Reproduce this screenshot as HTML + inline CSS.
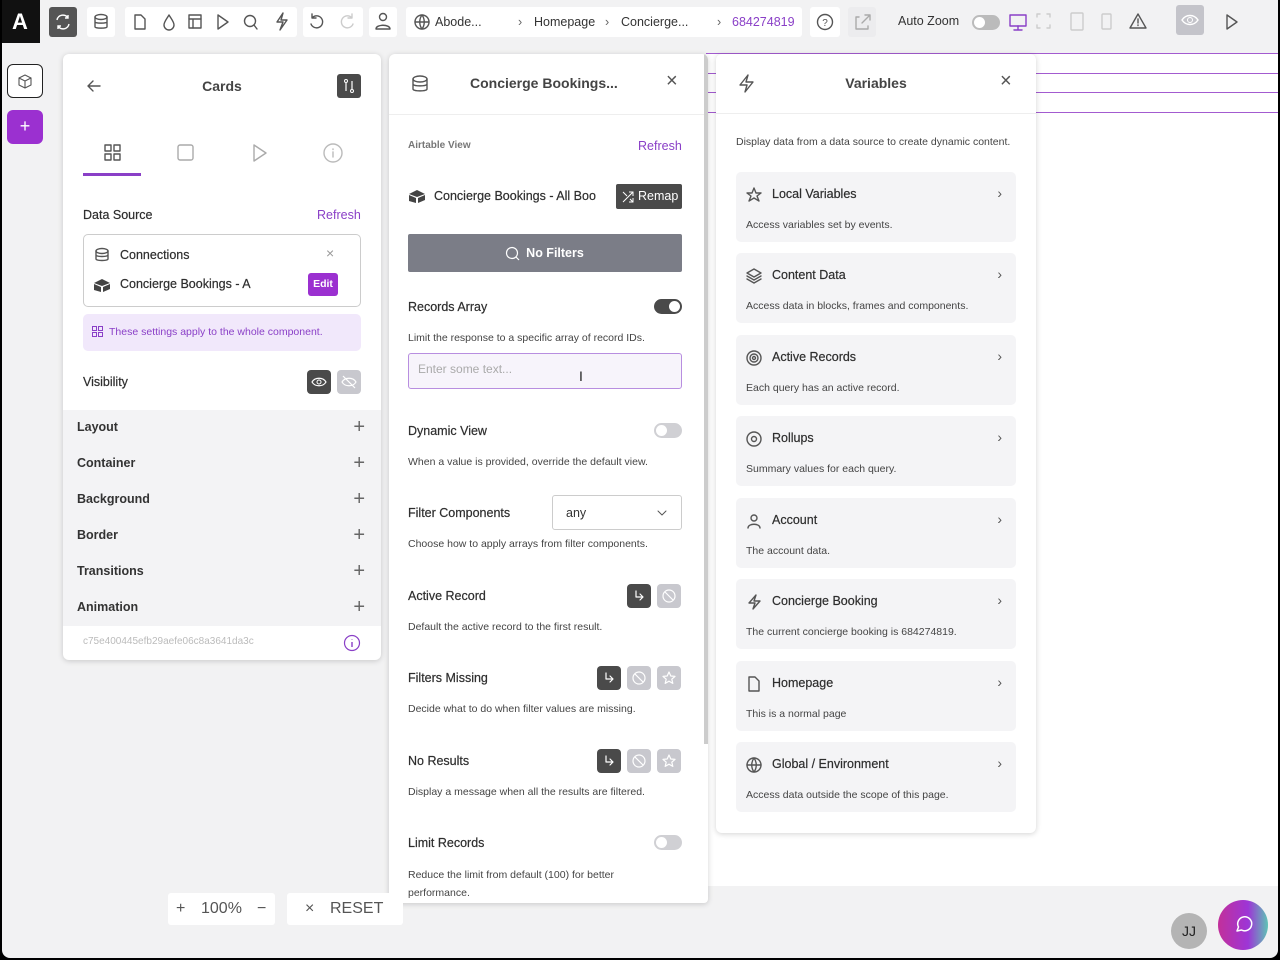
<!DOCTYPE html>
<html><head><meta charset="utf-8"><style>
*{box-sizing:border-box;margin:0;padding:0}
body{width:1280px;height:960px;overflow:hidden;background:#000;font-family:"Liberation Sans",sans-serif;color:#333;position:relative}
.a{position:absolute}
#app{position:absolute;left:2px;top:0;width:1276px;height:958px;background:#f2f2f3;border-radius:0 0 8px 8px;overflow:hidden}
.tb{position:absolute;top:7px;height:30px;background:#fff;border-radius:3px}
svg{display:block}
.ic{stroke:#555;fill:none;stroke-width:1.4;stroke-linecap:round;stroke-linejoin:round}
.panel{position:absolute;background:#fff;border-radius:6px;box-shadow:0 1px 6px rgba(0,0,0,.18)}
.lbl{font-size:12.5px;color:#2e2e2e;-webkit-text-stroke:0.2px #2e2e2e}
.sm{font-size:10.5px;color:#444}
.purple{color:#8a3fc7;-webkit-text-stroke:0}
.row{position:absolute;left:0;width:318px;height:36px;background:#f3f3f5;font-weight:bold;font-size:12.5px;color:#333;padding:10px 14px}
.row .p{position:absolute;right:16px;top:7px;font-size:20px;font-weight:normal;color:#666;line-height:20px}
.btn{position:absolute;width:24px;height:24px;border-radius:4px;background:#c8c8ce}
.btn.d{background:#4a4a4a}
.card{position:absolute;left:20px;width:280px;height:70px;background:#f4f4f6;border-radius:5px}
.card .h{position:absolute;left:36px;top:15px;font-size:12.5px;color:#2e2e2e;-webkit-text-stroke:0.2px #2e2e2e}
.card .s{position:absolute;left:10px;top:47px;font-size:10.5px;color:#444}
.card .ch{position:absolute;right:14px;top:13px;font-size:14px;color:#555}
.card svg{position:absolute;left:10px;top:15px}
.tog{position:absolute;width:28px;height:15px;border-radius:8px;background:#d0d0d4}
.tog:after{content:"";position:absolute;left:2px;top:2px;width:11px;height:11px;border-radius:50%;background:#fff}
.tog.on{background:#4a4a4a}.tog.on:after{left:15px}
.w{stroke:#fff;fill:none;stroke-width:1.2;stroke-linecap:round;stroke-linejoin:round}
</style></head><body>
<svg width="0" height="0" style="position:absolute"><defs>
<symbol id="arr" viewBox="0 0 24 24"><path d="M9 7v6h7M13 10l3 3-3 3" class="w"/></symbol>
<symbol id="ban" viewBox="0 0 24 24"><circle cx="12" cy="12" r="6" class="w"/><path d="M8 8l8 8" class="w"/></symbol>
<symbol id="star" viewBox="0 0 24 24"><path d="M12 6l1.8 4 4.2.4-3.2 2.8 1 4.2-3.8-2.2-3.8 2.2 1-4.2L6 10.4l4.2-.4z" class="w"/></symbol>
</defs></svg>
<div id="app">
<div class="a" style="left:-2px;top:0;width:40px;height:43px;background:#111;color:#fff;font-weight:bold;font-size:22px;text-align:center;line-height:43px">A</div>
<div class="tb" style="left:47px;width:28px;background:#555"><svg width="28" height="30"><path d="M8 13a6 6 0 0 1 11-2M20 17a6 6 0 0 1-11 2M19 8v3h-3M9 22v-3h3" stroke="#fff" fill="none" stroke-width="1.4"/></svg></div>
<div class="tb" style="left:85px;width:28px"><svg width="28" height="30"><ellipse cx="14" cy="10" rx="6" ry="2.5" class="ic"/><path d="M8 10v10c0 1.5 12 1.5 12 0V10M8 15c0 1.5 12 1.5 12 0" class="ic"/></svg></div>
<div class="tb" style="left:123px;width:172px"><svg width="172" height="30"><path d="M10 8h6l4 4v10h-10z" class="ic"/><path d="M44 8c-3 5-5 7-5 10a5 5 0 0 0 10 0c0-3-2-5-5-10z" class="ic"/><rect x="64" y="8" width="12" height="13" class="ic"/><path d="M64 12h12M68 12v9" class="ic"/><path d="M93 8l10 7-10 7z" class="ic"/><circle cx="125" cy="14" r="5.5" class="ic"/><path d="M129 18l3 4" class="ic"/><path d="M158 6l-6 9h6l-3 8 7-10h-6z" class="ic"/></svg></div>
<div class="tb" style="left:301px;width:60px"><svg width="60" height="30"><path d="M9 11a6 6 0 1 1-1 6M9 7v4h4" class="ic"/><path d="M49 11a6 6 0 1 0 1 6M49 7v4h-4" class="ic" style="stroke:#ccc"/></svg></div>
<div class="tb" style="left:367px;width:28px"><svg width="28" height="30"><circle cx="14" cy="10" r="3.5" class="ic"/><path d="M7 22c0-5 14-5 14 0z" class="ic"/></svg></div>
<div class="tb" style="left:404px;width:396px;font-size:12.5px;line-height:30px">
<svg width="20" height="30" class="a" style="left:6px;top:0"><circle cx="10" cy="15" r="7" class="ic"/><path d="M3 15h14M10 8c-3 4-3 10 0 14M10 8c3 4 3 10 0 14" class="ic"/></svg>
<span class="a" style="left:29px">Abode...</span><span class="a" style="left:112px;color:#666">›</span><span class="a" style="left:128px">Homepage</span><span class="a" style="left:199px;color:#666">›</span><span class="a" style="left:215px">Concierge...</span><span class="a" style="left:311px;color:#666">›</span><span class="a purple" style="left:326px">684274819</span></div>
<div class="tb" style="left:808px;width:30px"><svg width="30" height="30"><circle cx="15" cy="15" r="7.5" class="ic"/><text x="15" y="19" font-size="10" text-anchor="middle" fill="#555" font-family="Liberation Sans">?</text></svg></div>
<div class="tb" style="left:846px;width:28px;background:#ececee"><svg width="28" height="30"><path d="M11 10H8v12h12v-3M14 16l8-8M17 8h5v5" class="ic" style="stroke:#aaa"/></svg></div>
<div class="a" style="left:896px;top:14px;font-size:12.5px">Auto Zoom</div>
<div class="tog" style="left:970px;top:15px;background:#bbb"></div>
<svg class="a" style="left:1005px;top:10px" width="140" height="24"><rect x="3" y="5" width="16" height="11" class="ic" style="stroke:#8a3fc7"/><path d="M7 20h8M11 16v4" class="ic" style="stroke:#8a3fc7"/><path d="M33 4h-3v3M40 4h3v3M33 18h-3v-3M40 18h3v-3" class="ic" style="stroke:#ccc"/><rect x="64" y="3" width="12" height="17" rx="1" class="ic" style="stroke:#ccc"/><rect x="95" y="4" width="9" height="15" rx="1" class="ic" style="stroke:#ccc"/><path d="M141 4l-8 14h16z" class="ic" transform="translate(-10 0)"/><path d="M131 9v4M131 15v.5" class="ic"/></svg>
<div class="a" style="left:1174px;top:5px;width:28px;height:30px;background:#c4c4ca;border-radius:3px"><svg width="28" height="30"><path d="M6 15c4-6 12-6 16 0c-4 6-12 6-16 0z" stroke="#fff" fill="none" stroke-width="1.4"/><circle cx="14" cy="15" r="2.5" stroke="#fff" fill="none"/></svg></div>
<svg class="a" style="left:1222px;top:13px" width="16" height="18"><path d="M3 2l10 7-10 7z" class="ic"/></svg>

<div class="a" style="left:5px;top:64px;width:36px;height:34px;background:#fff;border:1.5px solid #222;border-radius:6px"><svg width="34" height="32"><path d="M17 10l6 3v7l-6 3-6-3v-7zM11 13l6 3 6-3M17 16v7" class="ic" style="stroke-width:1.1"/></svg></div>
<div class="a" style="left:5px;top:110px;width:36px;height:34px;background:#9b30d0;border-radius:6px;color:#fff;text-align:center;font-size:18px;line-height:33px">+</div>

<div class="a" style="left:704px;top:53px;width:572px;height:833px;background:#fff"></div>
<div class="a" style="left:704px;top:53px;width:572px;height:1px;background:#a35bd0"></div>
<div class="a" style="left:704px;top:73px;width:572px;height:1px;background:#a35bd0"></div>
<div class="a" style="left:704px;top:92px;width:572px;height:1px;background:#a35bd0"></div>
<div class="a" style="left:704px;top:112px;width:572px;height:1px;background:#a35bd0"></div>

<div class="panel" style="left:61px;top:54px;width:318px;height:606px;overflow:hidden">
<svg class="a" style="left:22px;top:23px" width="18" height="18"><path d="M15 9H3M8 4L3 9l5 5" class="ic"/></svg>
<div class="a" style="left:0;width:318px;top:24px;text-align:center;font-weight:bold;font-size:14px;color:#444">Cards</div>
<div class="a" style="left:274px;top:20px;width:24px;height:24px;background:#4a4a4a;border-radius:3px"><svg width="24" height="24"><circle cx="9" cy="7" r="1.5" stroke="#fff" fill="none"/><circle cx="15" cy="17" r="1.5" stroke="#fff" fill="none"/><path d="M9 9v8M15 7v8" stroke="#fff" fill="none" stroke-width="1.2"/></svg></div>
<svg class="a" style="left:41px;top:90px" width="18" height="18"><rect x="1" y="1" width="6" height="6" class="ic"/><rect x="10" y="1" width="6" height="6" class="ic"/><rect x="1" y="10" width="6" height="6" class="ic"/><rect x="10" y="10" width="6" height="6" class="ic"/></svg>
<div class="a" style="left:20px;top:119px;width:58px;height:3px;background:#8a3fc7"></div>
<svg class="a" style="left:114px;top:90px" width="18" height="18"><rect x="1" y="1" width="15" height="15" rx="2" class="ic" style="stroke:#aaa"/></svg>
<svg class="a" style="left:188px;top:90px" width="18" height="18"><path d="M3 1l12 8-12 8z" class="ic" style="stroke:#aaa"/></svg>
<svg class="a" style="left:260px;top:89px" width="20" height="20"><circle cx="10" cy="10" r="9" class="ic" style="stroke:#bbb"/><path d="M10 9v5M10 6v.5" class="ic" style="stroke:#bbb"/></svg>
<div class="a lbl" style="left:20px;top:154px">Data Source</div>
<div class="a lbl purple" style="left:254px;top:154px">Refresh</div>
<div class="a" style="left:20px;top:180px;width:278px;height:73px;border:1px solid #ccc;border-radius:5px">
<svg class="a" style="left:10px;top:12px" width="16" height="16"><ellipse cx="8" cy="4" rx="6" ry="2.5" class="ic"/><path d="M2 4v8c0 2 12 2 12 0V4M2 8c0 2 12 2 12 0" class="ic"/></svg>
<div class="a lbl" style="left:36px;top:13px">Connections</div>
<div class="a" style="left:242px;top:10px;color:#999;font-size:14px">×</div>
<svg class="a" style="left:9px;top:43px" width="18" height="14"><path d="M1 5l8-4 8 4-8 3z" fill="#444"/><path d="M1 6v6l7 2V9zM10 9v5l7-3V6z" fill="#444"/></svg>
<div class="a lbl" style="left:36px;top:42px">Concierge Bookings - A</div>
<div class="a" style="left:224px;top:38px;width:30px;height:23px;background:#9b30d0;border-radius:3px;color:#fff;font-size:10.5px;font-weight:bold;text-align:center;line-height:23px">Edit</div>
</div>
<div class="a" style="left:20px;top:260px;width:278px;height:37px;background:#f1e8fb;border-radius:5px;font-size:10.5px;color:#8a3fc7;padding:12px 0 0 26px">These settings apply to the whole component.
<svg class="a" style="left:9px;top:12px" width="12" height="12"><rect x="0.5" y="0.5" width="4" height="4" fill="none" stroke="#8a3fc7"/><rect x="6.5" y="0.5" width="4" height="4" fill="none" stroke="#8a3fc7"/><rect x="0.5" y="6.5" width="4" height="4" fill="none" stroke="#8a3fc7"/><rect x="6.5" y="6.5" width="4" height="4" fill="none" stroke="#8a3fc7"/></svg></div>
<div class="a lbl" style="left:20px;top:321px">Visibility</div>
<div class="btn d" style="left:244px;top:316px"><svg width="24" height="24"><path d="M5 12c3-5 11-5 14 0c-3 5-11 5-14 0z" stroke="#fff" fill="none" stroke-width="1.2"/><circle cx="12" cy="12" r="2" stroke="#fff" fill="none"/></svg></div>
<div class="btn" style="left:274px;top:316px"><svg width="24" height="24"><path d="M5 12c3-5 11-5 14 0c-3 5-11 5-14 0zM6 6l12 12" stroke="#fff" fill="none" stroke-width="1.2"/></svg></div>
<div class="row" style="top:356px">Layout<span class="p">+</span></div>
<div class="row" style="top:392px">Container<span class="p">+</span></div>
<div class="row" style="top:428px">Background<span class="p">+</span></div>
<div class="row" style="top:464px">Border<span class="p">+</span></div>
<div class="row" style="top:500px">Transitions<span class="p">+</span></div>
<div class="row" style="top:536px">Animation<span class="p">+</span></div>
<div class="a" style="left:20px;top:582px;font-size:10px;color:#bbb">c75e400445efb29aefe06c8a3641da3c</div>
<svg class="a" style="left:280px;top:580px" width="18" height="18"><circle cx="9" cy="9" r="7.5" fill="none" stroke="#8a3fc7" stroke-width="1.2"/><path d="M9 8v5M9 5.5v.5" stroke="#8a3fc7" stroke-width="1.4"/></svg>
</div>

<div class="panel" style="left:387px;top:54px;width:319px;height:849px;overflow:hidden;border-radius:6px 6px 4px 4px">
<svg class="a" style="left:22px;top:20px" width="18" height="20"><ellipse cx="9" cy="5" rx="7" ry="3" class="ic"/><path d="M2 5v10c0 2.5 14 2.5 14 0V5M2 10c0 2.5 14 2.5 14 0" class="ic"/></svg>
<div class="a" style="left:81px;top:21px;font-weight:bold;font-size:14px;color:#444">Concierge Bookings...</div>
<div class="a" style="left:277px;top:16px;font-size:20px;color:#555">×</div>
<div class="a" style="left:0;top:60px;width:319px;height:1px;background:#eee"></div>
<div class="a" style="left:19px;top:86px;font-size:10px;font-weight:bold;color:#777">Airtable View</div>
<div class="a lbl purple" style="left:249px;top:85px">Refresh</div>
<svg class="a" style="left:19px;top:135px" width="18" height="14"><path d="M1 5l8-4 8 4-8 3z" fill="#444"/><path d="M1 6v6l7 2V9zM10 9v5l7-3V6z" fill="#444"/></svg>
<div class="a lbl" style="left:45px;top:135px">Concierge Bookings - All Boo</div>
<div class="a" style="left:227px;top:130px;width:66px;height:25px;background:#4a4a4a;border-radius:2px;color:#fff;font-size:12.5px;line-height:25px;padding-left:22px">Remap<svg class="a" style="left:6px;top:7px" width="12" height="12"><path d="M1 11L11 1M7 1h4v4M1 1l4 4M11 11L8 8M11 7v4H7" stroke="#fff" fill="none" stroke-width="1"/></svg></div>
<div class="a" style="left:19px;top:180px;width:274px;height:38px;background:#7b7d87;border-radius:2px;color:#fff;font-weight:bold;font-size:12.5px;line-height:38px;text-align:center;padding-left:20px">No Filters<svg class="a" style="left:97px;top:12px" width="16" height="16"><circle cx="7" cy="7" r="5.5" stroke="#fff" fill="none" stroke-width="1.2"/><path d="M11 11l3 3" stroke="#fff" stroke-width="1.2"/></svg></div>
<div class="a lbl" style="left:19px;top:246px">Records Array</div>
<div class="tog on" style="left:265px;top:245px"></div>
<div class="a sm" style="left:19px;top:278px">Limit the response to a specific array of record IDs.</div>
<div class="a" style="left:19px;top:299px;width:274px;height:36px;border:1.5px solid #b88ee0;border-radius:3px;background:#f7f4fb;font-size:12px;color:#aaa;padding:8px 9px">Enter some text...</div>
<div class="a" style="left:190px;top:314px;font-size:14px;color:#222">I</div>
<div class="a lbl" style="left:19px;top:370px">Dynamic View</div>
<div class="tog" style="left:265px;top:369px"></div>
<div class="a sm" style="left:19px;top:402px">When a value is provided, override the default view.</div>
<div class="a lbl" style="left:19px;top:452px">Filter Components</div>
<div class="a" style="left:163px;top:441px;width:130px;height:35px;border:1px solid #ccc;border-radius:3px;font-size:12.5px;padding:10px 13px">any<svg class="a" style="right:14px;top:14px" width="10" height="6"><path d="M1 1l4 4 4-4" class="ic" style="stroke-width:1"/></svg></div>
<div class="a sm" style="left:19px;top:484px">Choose how to apply arrays from filter components.</div>
<div class="a lbl" style="left:19px;top:535px">Active Record</div>
<div class="btn d" style="left:238px;top:530px"><svg width="24" height="24"><use href="#arr"/></svg></div><div class="btn" style="left:268px;top:530px"><svg width="24" height="24"><use href="#ban"/></svg></div>
<div class="a sm" style="left:19px;top:567px">Default the active record to the first result.</div>
<div class="a lbl" style="left:19px;top:617px">Filters Missing</div>
<div class="btn d" style="left:208px;top:612px"><svg width="24" height="24"><use href="#arr"/></svg></div><div class="btn" style="left:238px;top:612px"><svg width="24" height="24"><use href="#ban"/></svg></div><div class="btn" style="left:268px;top:612px"><svg width="24" height="24"><use href="#star"/></svg></div>
<div class="a sm" style="left:19px;top:649px">Decide what to do when filter values are missing.</div>
<div class="a lbl" style="left:19px;top:700px">No Results</div>
<div class="btn d" style="left:208px;top:695px"><svg width="24" height="24"><use href="#arr"/></svg></div><div class="btn" style="left:238px;top:695px"><svg width="24" height="24"><use href="#ban"/></svg></div><div class="btn" style="left:268px;top:695px"><svg width="24" height="24"><use href="#star"/></svg></div>
<div class="a sm" style="left:19px;top:732px">Display a message when all the results are filtered.</div>
<div class="a lbl" style="left:19px;top:782px">Limit Records</div>
<div class="tog" style="left:265px;top:781px"></div>
<div class="a sm" style="left:19px;top:812px;line-height:18px;width:230px">Reduce the limit from default (100) for better performance.</div>
<div class="a" style="left:315px;top:0;width:4px;height:690px;background:#ccc"></div>
</div>

<div class="panel" style="left:714px;top:54px;width:320px;height:779px">
<svg class="a" style="left:20px;top:19px" width="20" height="20"><path d="M12 2l-8 10h7l-2 7 8-10h-7z" class="ic"/></svg>
<div class="a" style="left:0;width:320px;top:21px;text-align:center;font-weight:bold;font-size:14px;color:#444">Variables</div>
<div class="a" style="left:284px;top:16px;font-size:20px;color:#555">×</div>
<div class="a" style="left:0;top:59px;width:320px;height:1px;background:#eee"></div>
<div class="a sm" style="left:20px;top:82px">Display data from a data source to create dynamic content.</div>
<div class="card" style="top:118px"><svg width="16" height="16"><path d="M8 1l2 5h5l-4 3 2 5-5-3-5 3 2-5-4-3h5z" class="ic"/></svg><div class="h">Local Variables</div><div class="ch">›</div><div class="s">Access variables set by events.</div></div>
<div class="card" style="top:199px"><svg width="16" height="16"><path d="M8 1l7 4-7 4-7-4zM1 8l7 4 7-4M1 11l7 4 7-4" class="ic"/></svg><div class="h">Content Data</div><div class="ch">›</div><div class="s">Access data in blocks, frames and components.</div></div>
<div class="card" style="top:281px"><svg width="16" height="16"><circle cx="8" cy="8" r="7" class="ic"/><circle cx="8" cy="8" r="4" class="ic"/><circle cx="8" cy="8" r="1.5" class="ic"/></svg><div class="h">Active Records</div><div class="ch">›</div><div class="s">Each query has an active record.</div></div>
<div class="card" style="top:362px"><svg width="16" height="16"><circle cx="8" cy="8" r="7" class="ic"/><circle cx="8" cy="8" r="2.5" class="ic"/></svg><div class="h">Rollups</div><div class="ch">›</div><div class="s">Summary values for each query.</div></div>
<div class="card" style="top:444px"><svg width="16" height="16"><circle cx="8" cy="5" r="3" class="ic"/><path d="M2 15c0-5 12-5 12 0" class="ic"/></svg><div class="h">Account</div><div class="ch">›</div><div class="s">The account data.</div></div>
<div class="card" style="top:525px"><svg width="16" height="16"><path d="M10 1l-7 8h6l-2 6 7-8H8z" class="ic"/></svg><div class="h">Concierge Booking</div><div class="ch">›</div><div class="s">The current concierge booking is 684274819.</div></div>
<div class="card" style="top:607px"><svg width="16" height="16"><path d="M3 1h6l4 4v10H3z" class="ic"/></svg><div class="h">Homepage</div><div class="ch">›</div><div class="s">This is a normal page</div></div>
<div class="card" style="top:688px"><svg width="16" height="16"><circle cx="8" cy="8" r="7" class="ic"/><path d="M1 8h14M8 1c-3 4-3 10 0 14M8 1c3 4 3 10 0 14" class="ic"/></svg><div class="h">Global / Environment</div><div class="ch">›</div><div class="s">Access data outside the scope of this page.</div></div>
</div>

<div class="a" style="left:166px;top:893px;width:107px;height:32px;background:#fff;border-radius:3px;font-size:16px;color:#555;line-height:32px"><span class="a" style="left:8px">+</span><span class="a" style="left:33px">100%</span><span class="a" style="left:89px">−</span></div>
<div class="a" style="left:285px;top:893px;width:116px;height:32px;background:#fff;border-radius:3px;font-size:16px;color:#555;line-height:32px"><span class="a" style="left:18px">×</span><span class="a" style="left:43px">RESET</span></div>
<div class="a" style="left:1169px;top:913px;width:36px;height:36px;border-radius:50%;background:#b4b4b4;text-align:center;line-height:36px;font-size:14px;color:#222">JJ</div>
<div class="a" style="left:1216px;top:900px;width:50px;height:50px;border-radius:50%;background:linear-gradient(90deg,#c2309a,#9d35d6 60%,#5ec4b5)"><svg width="50" height="50"><path d="M19 31l1.5-4a7 7 0 1 1 3 3z" stroke="#fff" fill="none" stroke-width="1.5" stroke-linejoin="round"/></svg></div>
</div>
</body></html>
